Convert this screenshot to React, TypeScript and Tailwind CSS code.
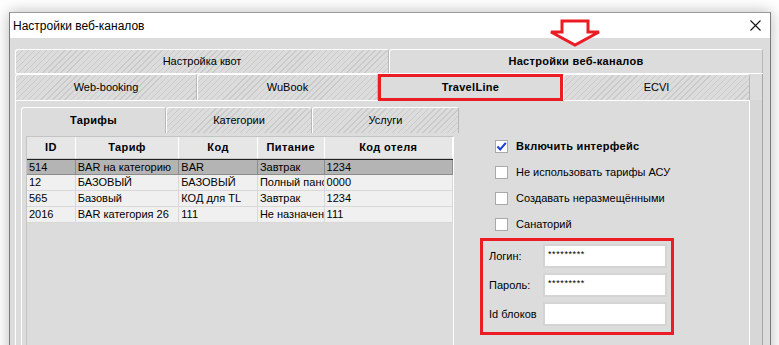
import type { ReactNode } from 'react'

// Hatched background used by inactive tabs
const HATCH =
  'bg-[repeating-linear-gradient(135deg,#cacaca_0px,#cacaca_1px,#dcdcdc_1px,#dcdcdc_4.3px)]'

type TabProps = {
  label: string
  active?: boolean
  width: string
  boxed?: boolean
}

function Tab({ label, active, width, boxed }: TabProps) {
  return (
    <div
      className={
        'relative flex h-full items-center justify-center rounded-t-[3px] border-l border-t border-r border-l-white border-t-white border-r-[#b8b8b8] text-[11px] ' +
        width +
        ' ' +
        (active ? 'bg-[#dcdcdc] font-bold tracking-[0.3px]' : HATCH)
      }
    >
      {label}
      {boxed && (
        <div className="pointer-events-none absolute inset-[-1px] border-[3px] border-[#ec1c24]" />
      )}
    </div>
  )
}

const COLS = [
  { title: 'ID', w: 'w-[49px]' },
  { title: 'Тариф', w: 'w-[104px]' },
  { title: 'Код', w: 'w-[79px]' },
  { title: 'Питание', w: 'w-[67px]' },
  { title: 'Код отеля', w: 'w-[129px]' },
]

const ROWS = [
  ['514', 'BAR на категорию', 'BAR', 'Завтрак', '1234'],
  ['12', 'БАЗОВЫЙ', 'БАЗОВЫЙ', 'Полный панс', '0000'],
  ['565', 'Базовый', 'КОД для TL', 'Завтрак', '1234'],
  ['2016', 'BAR категория 26', '111', 'Не назначен', '111'],
]

function Checkbox({ checked, children }: { checked?: boolean; children: ReactNode }) {
  return (
    <div className="flex h-[26px] items-center">
      <div className="flex h-[13px] w-[13px] items-center justify-center border border-[#a9a9a9] bg-white">
        {checked && (
          <svg width="11" height="11" viewBox="0 0 11 11">
            <path d="M1.5 5.5 L4.2 8.5 L9.8 1.8" fill="none" stroke="#1c3fd6" strokeWidth="2" />
          </svg>
        )}
      </div>
      <span className={'ml-[8px] text-[11px] ' + (checked ? 'font-bold tracking-[0.3px]' : '')}>
        {children}
      </span>
    </div>
  )
}

function Field({ label, value }: { label: string; value?: string }) {
  return (
    <div className="flex h-[24px] items-center">
      <span className="w-[54px] text-[11px]">{label}</span>
      <div className="flex h-[24px] w-[124px] items-start border-2 border-[#d4d4d4] bg-white pl-[3px] pt-[2px] text-[9px] leading-[12px] tracking-[0.6px]">
        {value}
      </div>
    </div>
  )
}

export default function App() {
  return (
    <div className="relative h-[345px] w-[779px] overflow-hidden bg-white font-['Liberation_Sans',Arial,sans-serif] text-black">
      <div className="ml-[9px] mt-[12px] w-[762px] border border-[#7a7a7a] border-t-[#9a9a9a] shadow-[0_0_14px_rgba(0,0,0,0.28)]">
        {/* title bar */}
        <div className="flex h-[25px] items-center justify-between bg-white pl-[3px] pr-[9px] text-[12px]">
          <span>Настройки веб-каналов</span>
          <svg width="11" height="11" viewBox="0 0 11 11">
            <path d="M0.5 0.5 L10.5 10.5 M10.5 0.5 L0.5 10.5" stroke="#111" strokeWidth="1.1" />
          </svg>
        </div>

        {/* body */}
        <div className="h-[330px] bg-[#dcdcdc] pl-[5px] pr-[7px] pt-[11px]">
          <div className="flex h-[25px] border-b border-white">
            <Tab label="Настройка квот" width="w-[374px]" />
            <Tab label="Настройки веб-каналов" width="w-[374px]" active />
          </div>

          <div className="border-r border-[#a8a8a8]">
            <div className="flex h-[26px]">
              <Tab label="Web-booking" width="w-[182px]" />
              <Tab label="WuBook" width="w-[181px]" />
              <Tab label="TravelLine" width="w-[185px]" active boxed />
              <Tab label="ECVI" width="w-[187px]" />
            </div>

            <div className="flex">
              <div className="flex h-[260px] w-[735px] border-l border-r border-t border-white">
                {/* left: inner tabs + table */}
                <div className="pl-[5px] pt-[6px]">
                  <div className="flex h-[26px]">
                    <Tab label="Тарифы" width="w-[145px]" active />
                    <Tab label="Категории" width="w-[146px]" />
                    <Tab label="Услуги" width="w-[147px]" />
                  </div>
                  <div className="border-l border-white pl-[4px] pt-[3px]">
                    <div className="h-[220px] w-[428px] border-l border-r border-t border-l-[#c4c4c4] border-r-white border-t-[#c4c4c4] text-[11px]">
                      <div className="flex h-[22px] bg-[#e6e6e6]">
                        {COLS.map(c => (
                          <div
                            key={c.title}
                            className={
                              'flex items-center justify-center border-b border-r border-b-[#c8c8c8] border-r-white font-bold tracking-[0.4px] ' +
                              c.w
                            }
                          >
                            {c.title}
                          </div>
                        ))}
                      </div>
                      {ROWS.map((r, i) => (
                        <div
                          key={r[0]}
                          className={
                            'flex h-[16px] ' +
                            (i === 0 ? 'border-t border-[#222] bg-[#b4b4b4]' : 'bg-[#f0f0f0]')
                          }
                        >
                          {r.map((v, j) => (
                            <div
                              key={j}
                              className={
                                'overflow-hidden whitespace-nowrap border-b border-r pl-[2px] leading-[15px] ' +
                                (i === 0 ? 'border-[#8c8c8c] ' : 'border-[#d8d8d8] ') +
                                COLS[j].w
                              }
                            >
                              {v}
                            </div>
                          ))}
                        </div>
                      ))}
                    </div>
                  </div>
                </div>

                {/* right: options */}
                <div className="ml-[21px] pt-[32px]">
                  <div className="pl-[15px]">
                    <Checkbox checked>Включить интерфейс</Checkbox>
                    <Checkbox>Не использовать тарифы АСУ</Checkbox>
                    <Checkbox>Создавать неразмещёнными</Checkbox>
                    <Checkbox>Санаторий</Checkbox>
                  </div>
                  <div className="mt-[1px] flex w-[194px] flex-col gap-[5px] border-[3px] border-[#ec1c24] pb-[6px] pl-[6px] pt-[3px]">
                    <Field label="Логин:" value="*********" />
                    <Field label="Пароль:" value="*********" />
                    <Field label="Id блоков" />
                  </div>
                </div>
              </div>
              <div className="h-[260px] flex-1 bg-[#d7d7d7]" />
            </div>
          </div>
        </div>
      </div>

      {/* annotation arrow */}
      <svg className="absolute left-[548px] top-[19px]" width="54" height="30" viewBox="0 0 54 30">
        <path
          d="M14 2 L40 2 L40 13 L51 13 L27 26 L3 13 L14 13 Z"
          fill="white"
          stroke="#ec1c24"
          strokeWidth="3"
          strokeLinejoin="miter"
        />
      </svg>
    </div>
  )
}
